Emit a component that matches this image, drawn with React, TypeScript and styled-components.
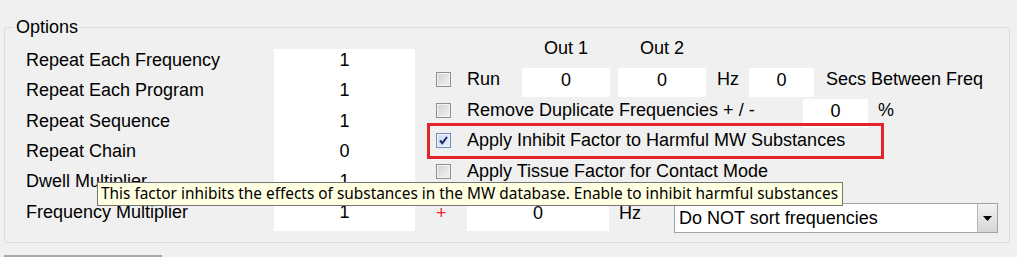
import styled, { createGlobalStyle } from 'styled-components';

const GlobalStyle = createGlobalStyle`
  html, body {
    margin: 0;
    padding: 0;
    background: #f0f0f0;
  }
  body {
    font-family: "Liberation Sans", Arial, sans-serif;
    font-size: 18px;
    color: #000;
  }
`;

const leftRows = [
  { label: 'Repeat Each Frequency', value: '1' },
  { label: 'Repeat Each Program', value: '1' },
  { label: 'Repeat Sequence', value: '1' },
  { label: 'Repeat Chain', value: '0' },
  { label: 'Dwell Multiplier', value: '1' },
  { label: 'Frequency Multiplier', value: '1' },
];

function CheckBox({ checked = false }: { checked?: boolean }) {
  return (
    <CheckStyle $checked={checked}>
      {checked && (
        <svg width="11" height="11" viewBox="0 0 11 11">
          <path d="M2 5.5 L4.3 8.2 L9 2" fill="none" stroke="#1a2a6c" strokeWidth="2" />
        </svg>
      )}
    </CheckStyle>
  );
}

function App() {
  return (
    <Page>
      <GlobalStyle />
      <Frame>
        <Legend>Options</Legend>
        <Body>
          <LeftPanel>
            <LabelList>
              {leftRows.map((row) => (
                <Cell key={row.label}>{row.label}</Cell>
              ))}
            </LabelList>
            <ValueBox>
              {leftRows.map((row) => (
                <Cell key={row.label} $center>
                  {row.value}
                </Cell>
              ))}
            </ValueBox>
          </LeftPanel>

          <RightPanel>
            <HeaderRow>
              <HeaderCell>Out 1</HeaderCell>
              <HeaderCell>Out 2</HeaderCell>
            </HeaderRow>

            <OptionRow>
              <CheckBox />
              <OptionLabel $width={55}>Run</OptionLabel>
              <Field $width={88}>0</Field>
              <Field $width={88} $left={8}>0</Field>
              <Unit $left={11} $right={10}>Hz</Unit>
              <Field $width={65}>0</Field>
              <Unit $left={12}>Secs Between Freq</Unit>
            </OptionRow>

            <OptionRow>
              <CheckBox />
              <OptionLabel $width={336}>Remove Duplicate Frequencies + / -</OptionLabel>
              <Field $width={65} $top={4}>0</Field>
              <Unit $left={10}>%</Unit>
            </OptionRow>

            <OptionRow $highlight>
              <CheckBox checked />
              <OptionLabel>Apply Inhibit Factor to Harmful MW Substances</OptionLabel>
            </OptionRow>

            <OptionRow>
              <CheckBox />
              <OptionLabel>Apply Tissue Factor for Contact Mode</OptionLabel>
            </OptionRow>

            <BottomRow>
              <Plus>+</Plus>
              <Field $width={142} $top={0} $height={30}>0</Field>
              <Unit $left={10} $pad>Hz</Unit>
              <Dropdown>
                <DropdownText>Do NOT sort frequencies</DropdownText>
                <DropdownButton>
                  <svg width="9" height="5" viewBox="0 0 9 5">
                    <path d="M0 0 H9 L4.5 5 Z" fill="#000" />
                  </svg>
                </DropdownButton>
              </Dropdown>
            </BottomRow>
          </RightPanel>
        </Body>
      </Frame>
      <TabEdge />
      <Tooltip>
        This factor inhibits the effects of substances in the MW database. Enable to inhibit harmful substances
      </Tooltip>
    </Page>
  );
}

export default App;

const Page = styled.div`
  position: relative;
  width: 1017px;
  height: 257px;
  box-sizing: border-box;
  padding: 16.5px 0 0 4px;
  overflow: hidden;
`;

const Frame = styled.fieldset`
  width: 1006px;
  box-sizing: border-box;
  margin: 0;
  padding: 0 0 9px 0;
  border: 1px solid #d5dde4;
  border-radius: 3px;
`;

const Legend = styled.legend`
  margin-left: 9px;
  padding: 0 2px;
  line-height: 21px;
`;

const Body = styled.div`
  display: flex;
  align-items: flex-start;
  padding-left: 21px;
`;

const LeftPanel = styled.div`
  display: flex;
  margin-top: 11.5px;
`;

const LabelList = styled.div`
  width: 248px;
  display: flex;
  flex-direction: column;
`;

const ValueBox = styled.div`
  width: 141px;
  display: flex;
  flex-direction: column;
  background: #fff;
`;

const Cell = styled.div<{ $center?: boolean }>`
  height: 30.33px;
  box-sizing: border-box;
  padding-top: 1px;
  line-height: 21px;
  white-space: nowrap;
  text-align: ${(p) => (p.$center ? 'center' : 'left')};
`;

const RightPanel = styled.div`
  margin-left: 12px;
  display: flex;
  flex-direction: column;
`;

const HeaderRow = styled.div`
  height: 27px;
  display: flex;
  gap: 8px;
  padding-left: 95px;
  line-height: 21px;
`;

const HeaderCell = styled.div`
  width: 88px;
  text-align: center;
`;

const OptionRow = styled.div<{ $highlight?: boolean }>`
  height: 30.5px;
  box-sizing: border-box;
  display: flex;
  align-items: center;
  width: ${(p) => (p.$highlight ? '451px' : '457px')};
  margin: ${(p) => (p.$highlight ? '0 3px' : '0')};
  padding-left: ${(p) => (p.$highlight ? '6px' : '9px')};
  outline: ${(p) => (p.$highlight ? '3px solid #e3242b' : 'none')};
  line-height: 21px;
  white-space: nowrap;
`;

const CheckStyle = styled.span<{ $checked: boolean }>`
  width: 15px;
  height: 15px;
  flex: none;
  box-sizing: border-box;
  display: flex;
  align-items: center;
  justify-content: center;
  border: 1px solid ${(p) => (p.$checked ? '#6f8fb4' : '#8e8f8f')};
  box-shadow: inset 0 0 0 1px ${(p) => (p.$checked ? '#eef4fb' : '#f4f4f4')};
  background: ${(p) =>
    p.$checked
      ? 'linear-gradient(135deg, #c9daee 0%, #e9f1fa 100%)'
      : 'linear-gradient(135deg, #d2d2d2 0%, #f2f2f2 100%)'};
`;

const OptionLabel = styled.span<{ $width?: number }>`
  margin-left: 16px;
  width: ${(p) => (p.$width ? `${p.$width}px` : 'auto')};
  flex: none;
`;

const Field = styled.div<{ $width: number; $left?: number; $top?: number; $height?: number }>`
  width: ${(p) => p.$width}px;
  height: ${(p) => p.$height ?? 29}px;
  margin-left: ${(p) => p.$left ?? 0}px;
  margin-top: ${(p) => p.$top ?? 3.5}px;
  align-self: flex-start;
  flex: none;
  box-sizing: border-box;
  padding-top: 1.5px;
  background: #fff;
  line-height: 21px;
  text-align: center;
`;

const Unit = styled.span<{ $left?: number; $right?: number; $pad?: boolean }>`
  margin-left: ${(p) => p.$left ?? 0}px;
  margin-right: ${(p) => p.$right ?? 0}px;
  padding-top: ${(p) => (p.$pad ? '1.5px' : '0')};
  line-height: 21px;
  flex: none;
`;

const BottomRow = styled.div`
  display: flex;
  align-items: flex-start;
  margin-top: 14.5px;
  padding-left: 9px;
  line-height: 21px;
`;

const Plus = styled.span`
  width: 31px;
  padding-top: 1.5px;
  color: #e8242a;
  flex: none;
`;

const Dropdown = styled.div`
  margin-left: 33px;
  margin-top: 2px;
  width: 324px;
  height: 30px;
  box-sizing: border-box;
  display: flex;
  border: 1px solid #a3a3a3;
  background: #fff;
`;

const DropdownText = styled.div`
  flex: 1;
  padding-left: 4px;
  line-height: 28px;
  white-space: nowrap;
`;

const DropdownButton = styled.div`
  width: 20px;
  box-sizing: border-box;
  display: flex;
  align-items: center;
  justify-content: center;
  border-left: 1px solid #b4b4b4;
  background: linear-gradient(to bottom, #f2f2f2 0%, #e4e4e4 50%, #d6d6d6 100%);
`;

const TabEdge = styled.div`
  width: 158px;
  height: 2px;
  margin-top: 11.5px;
  background: #a8a8a8;
`;

const Tooltip = styled.div`
  position: absolute;
  left: 97px;
  top: 182px;
  width: 746px;
  height: 24px;
  box-sizing: border-box;
  padding-left: 3px;
  border: 1px solid #767676;
  background: #ffffe1;
  font-family: "Noto Sans", "Open Sans", sans-serif;
  font-size: 15.4px;
  line-height: 22px;
  color: #000;
  white-space: nowrap;
`;
